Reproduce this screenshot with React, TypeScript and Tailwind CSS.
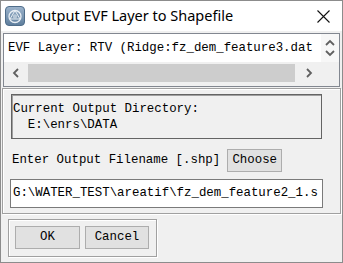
import React from 'react'

const mono = "font-['Liberation_Mono',monospace] text-[12.4px] leading-none text-black"

function AppIcon() {
    return (
        <svg width="20" height="20" viewBox="0 0 20 20">
            <defs>
                <linearGradient id="ic" x1="0" y1="0" x2="0" y2="1">
                    <stop offset="0" stopColor="#9db4cc" />
                    <stop offset="1" stopColor="#5d7d9c" />
                </linearGradient>
            </defs>
            <rect x="0.5" y="0.5" width="19" height="19" rx="3.5" fill="url(#ic)" stroke="#4f6d8a" />
            <circle cx="10" cy="10.5" r="6" fill="none" stroke="#e8eef4" strokeWidth="1.3" />
            <path d="M10 4.5 L5 13 L15 13 Z" fill="none" stroke="#e8eef4" strokeWidth="1" />
            <circle cx="10" cy="10.5" r="2.2" fill="#d0dbe6" opacity="0.7" />
        </svg>
    )
}

function Chevron({ dir }: { dir: 'up' | 'down' | 'left' | 'right' }) {
    const d = {
        up: 'M1 6 L5 2 L9 6',
        down: 'M1 2 L5 6 L9 2',
        left: 'M6 1 L2 5 L6 9',
        right: 'M3 1 L7 5 L3 9',
    }[dir]
    const vertical = dir === 'up' || dir === 'down'
    return (
        <svg width={vertical ? 10 : 9} height={vertical ? 8 : 10} viewBox={vertical ? '0 0 10 8' : '0 0 9 10'}>
            <path d={d} fill="none" stroke="#606060" strokeWidth="1.8" />
        </svg>
    )
}

function WinButton({ label, w }: { label: string; w: string }) {
    return (
        <div className={`${w} h-[23px] flex items-center justify-center bg-[#e1e1e1] border border-[#adadad] ${mono}`}>
            {label}
        </div>
    )
}

export default function App() {
    return (
        <div className="w-[343px] h-[263px] border border-[#8c8c8c] flex flex-col bg-[#f0f0f0] overflow-hidden">
            {/* Title bar */}
            <div className="h-[30px] bg-white flex items-center pl-[4px] shrink-0">
                <AppIcon />
                <span className="ml-[6px] font-['Noto_Sans',sans-serif] text-[14.5px] text-black">
                    Output EVF Layer to Shapefile
                </span>
                <svg className="ml-auto mr-[12px]" width="13" height="13" viewBox="0 0 13 13">
                    <path d="M0.5 0.5 L12.5 12.5 M12.5 0.5 L0.5 12.5" stroke="#111" strokeWidth="1.1" />
                </svg>
            </div>

            <div className="flex-1 flex flex-col pt-[2px] px-[1px]">
                {/* Layer list */}
                <div className="mx-[1px] h-[54px] border border-[#828790] flex flex-col bg-[#f0f0f0]">
                    <div className="flex h-[28px]">
                        <div className={`flex-1 bg-white flex items-center pl-[4px] overflow-hidden whitespace-nowrap ${mono}`}>
                            EVF Layer: RTV (Ridge:fz_dem_feature3.dat
                        </div>
                        <div className="w-[18px] flex flex-col items-center justify-center gap-[2px] bg-[#f7f7f7]">
                            <Chevron dir="up" />
                            <Chevron dir="down" />
                        </div>
                    </div>
                    <div className="flex h-[22px] items-stretch">
                        <div className="w-[24px] flex items-center justify-center">
                            <Chevron dir="left" />
                        </div>
                        <div className="flex-1 flex items-center">
                            <div className="h-[18px] w-full bg-[#cdcdcd]" />
                        </div>
                        <div className="w-[26px] flex items-center justify-center">
                            <Chevron dir="right" />
                        </div>
                        <div className="w-[18px]" />
                    </div>
                </div>

                {/* Output group */}
                <div className="mt-[1px] h-[126px] border border-[#a0a0a0] shadow-[inset_1px_1px_0_#fff,1px_1px_0_#fff] pl-[8px] pt-[5px] flex flex-col">
                    <div className="w-[311px] h-[45px] border border-[#646464] shadow-[inset_1px_1px_0_#a0a0a0] flex flex-col pl-[1px] pt-[8px] gap-[4px]">
                        <div className={mono}>Current Output Directory:</div>
                        <div className={mono}>{'  E:\\enrs\\DATA'.replace(/ /g, '\u00a0')}</div>
                    </div>
                    <div className="mt-[9px] flex items-center h-[24px]">
                        <span className={`ml-[1px] ${mono}`}>Enter Output Filename [.shp]</span>
                        <div className="ml-[7px]">
                            <WinButton label="Choose" w="w-[55px]" />
                        </div>
                    </div>
                    <div className={`mt-[7px] -ml-[1px] w-[313px] h-[29px] bg-white border border-[#7a7a7a] flex items-center pl-[2px] overflow-hidden whitespace-nowrap ${mono}`}>
                        G:\WATER_TEST\areatif\fz_dem_feature2_1.s
                    </div>
                </div>

                {/* Buttons */}
                <div className="mt-[5px] ml-[6px] w-[149px] h-[38px] border border-[#a0a0a0] shadow-[inset_1px_1px_0_#fff,1px_1px_0_#fff] flex items-start pt-[6px] pl-[6px] gap-[5px]">
                    <WinButton label="OK" w="w-[65px]" />
                    <WinButton label="Cancel" w="w-[64px]" />
                </div>
            </div>
        </div>
    )
}
